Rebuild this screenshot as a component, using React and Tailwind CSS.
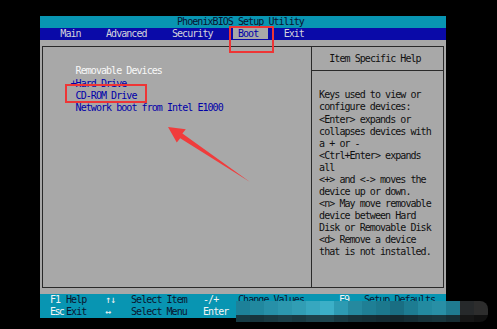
import React from "react";

const helpLines = [
  "Keys used to view or",
  "configure devices:",
  "<Enter> expands or",
  "collapses devices with",
  "a + or -",
  "<Ctrl+Enter> expands",
  "all",
  "<+> and <-> moves the",
  "device up or down.",
  "<n> May move removable",
  "device between Hard",
  "Disk or Removable Disk",
  "<d> Remove a device",
  "that is not installed.",
];

const mosaicTop = [
  "#1d8199", "#21889f", "#2790a8", "#2c97ae", "#319db4", "#37a7bf", "#3cafc7",
  "#2d9ab2", "#25899f", "#1f7f95", "#1c788d", "#1a6e83", "#1d7c92", "#238aa0",
  "#288fa5", "#1f7b90", "#26292b", "#2d2d2d",
];

const mosaicBottom = [
  "#163a44", "#17343c", "#1a3a42", "#1c3f48", "#1a3a42", "#1d424b", "#1e454e",
  "#1a3a42", "#173239", "#162f36", "#152b32", "#14282e", "#162d34", "#18333a",
  "#19363d", "#162d33", "#161616", "#111111",
];

const Row = ({ className = "", children }) => (
  <div className={`h-[12.08px] whitespace-pre ${className}`}>{children}</div>
);

export default function App() {
  return (
    <div className="relative w-[497px] h-[329px] overflow-hidden bg-black pt-[16px] pl-[40px]">
      <div className="w-[406px] font-['DejaVu_Sans_Mono',monospace] text-[10px] tracking-[-0.945px] leading-[12.08px]">
        {/* title bar */}
        <Row className="bg-[#0895b2] text-[#081430]">
          {"                           PhoenixBIOS Setup Utility"}
        </Row>

        {/* menu bar */}
        <Row className="bg-[#0a0aa8] text-[#d4d4dc]">
          {"    Main     Advanced     Security    "}
          <span className="bg-[#a8a8a8] text-[#0000a8]">{" Boot  "}</span>
          {"   Exit"}
        </Row>

        {/* body */}
        <div className="h-[253.7px] bg-[#a8a8a8] px-[2px] py-[6px]">
          <div className="flex h-full border border-[#2a2a2a]">
            <div className="w-[269px] border-r border-[#2a2a2a] pl-[27.5px] pt-[18.3px]">
              <Row className="text-[#f8f8f8]">{" Removable Devices"}</Row>
              <Row className="text-[#0000a8]">{"+Hard Drive"}</Row>
              <Row className="text-[#0000a8]">{" CD-ROM Drive"}</Row>
              <Row className="text-[#0000a8]">{" Network boot from Intel E1000"}</Row>
            </div>
            <div className="flex flex-1 flex-col">
              <div className="flex h-[24px] items-center border-b border-[#2a2a2a] pl-[17.3px] text-[#101010]">
                Item Specific Help
              </div>
              <div className="pl-[7.1px] pt-[18.2px] text-[#101010]">
                {helpLines.map((l) => (
                  <Row key={l}>{l}</Row>
                ))}
              </div>
            </div>
          </div>
        </div>

        {/* footer */}
        <div className="bg-[#0895b2] pl-[10px]">
          <div className="flex h-[12.08px] whitespace-pre">
            <span className="w-[16px] text-[#f4f4f4]">F1</span>
            <span className="w-[39px] text-[#0a1530]">Help</span>
            <span className="w-[26px] text-[#f4f4f4]">↑↓</span>
            <span className="w-[72px] text-[#0a1530]">Select Item</span>
            <span className="w-[35px] text-[#f4f4f4]">-/+</span>
            <span className="w-[101px] text-[#0a1530]">Change Values</span>
            <span className="w-[25px] text-[#f4f4f4]">F9</span>
            <span className="text-[#0a1530]">Setup Defaults</span>
          </div>
          <div className="flex h-[12.08px] whitespace-pre">
            <span className="w-[16px] tracking-[-1.6px] text-[#f4f4f4]">Esc</span>
            <span className="w-[39px] text-[#0a1530]">Exit</span>
            <span className="w-[26px] text-[#f4f4f4]">↔</span>
            <span className="w-[72px] text-[#0a1530]">Select Menu</span>
            <span className="w-[35px] text-[#f4f4f4]">Enter</span>
            <span className="w-[101px] text-[#0a1530]">Select ▶ Sub-Menu</span>
            <span className="w-[25px] text-[#f4f4f4]">F10</span>
            <span className="text-[#0a1530]">Save and Exit</span>
          </div>
        </div>
      </div>

      {/* pixelated watermark over footer */}
      <div className="absolute left-[236px] top-[301px] flex flex-col overflow-hidden rounded-r-[8px]">
        <div className="flex h-[14px]">
          {mosaicTop.map((c, i) => (
            <div key={i} className="h-full w-[14px]" style={{ backgroundColor: c }} />
          ))}
        </div>
        <div className="flex h-[7px]">
          {mosaicBottom.map((c, i) => (
            <div key={i} className="h-full w-[14px]" style={{ backgroundColor: c }} />
          ))}
        </div>
      </div>

      {/* red highlight boxes */}
      <div className="absolute left-[229px] top-[26px] h-[27px] w-[45px] border-2 border-[#ee3535]" />
      <div className="absolute left-[65px] top-[84px] h-[19px] w-[82px] border-2 border-[#ee3535]" />

      {/* red arrow */}
      <svg className="absolute left-0 top-0" width="497" height="329" viewBox="0 0 497 329">
        <polygon
          points="168,127 185.8,129.3 182.4,133.6 250,182 180.2,138.2 176.8,142.5"
          fill="#f03c3c"
        />
      </svg>
    </div>
  );
}
